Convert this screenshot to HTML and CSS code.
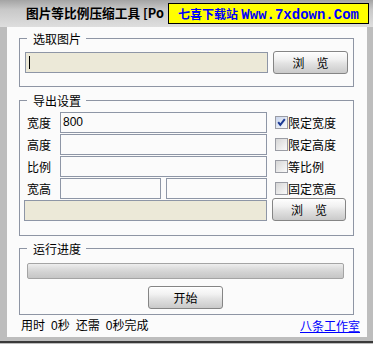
FILE: index.html
```html
<!DOCTYPE html>
<html lang="zh-CN">
<head>
<meta charset="utf-8">
<title>图片等比例压缩工具</title>
<link rel="stylesheet" href="styles.css">
</head>
<body>
<div class="window">
  <div class="titlebar">
    <span class="title">图片等比例压缩工具 [Po</span>
    <div class="ad"><span class="ad-cn">七喜下载站</span> <span class="ad-en">Www.7xdown.Com</span></div>
  </div>
  <div class="content">
    <fieldset class="group g1">
      <legend>选取图片</legend>
      <div class="pick-row">
        <div class="field beige caret"></div>
        <button class="btn">浏　览</button>
      </div>
    </fieldset>
    <fieldset class="group g2">
      <legend>导出设置</legend>
      <div class="settings">
        <span class="lbl">宽度</span>
        <div class="field">800</div>
        <label class="chk"><span class="box checked"><svg width="11" height="11" viewBox="0 0 11 11"><path d="M2.2 5.2 L4.3 7.8 L8.8 2.2" fill="none" stroke="#1c3a94" stroke-width="2"/></svg></span>限定宽度</label>

        <span class="lbl">高度</span>
        <div class="field"></div>
        <label class="chk"><span class="box"></span>限定高度</label>

        <span class="lbl">比例</span>
        <div class="field"></div>
        <label class="chk"><span class="box"></span>等比例</label>

        <span class="lbl">宽高</span>
        <div class="pair"><div class="field"></div><div class="field"></div></div>
        <label class="chk"><span class="box"></span>固定宽高</label>

        <div class="field beige wide"></div>
        <button class="btn btn-shift">浏　览</button>
      </div>
    </fieldset>
    <fieldset class="group g3">
      <legend>运行进度</legend>
      <div class="run">
        <div class="progress"></div>
        <button class="btn">开始</button>
      </div>
    </fieldset>
    <div class="status">
      <div class="times"><span>用时</span><span>0秒</span><span>还需</span><span>0秒完成</span></div>
      <a class="link" href="#">八条工作室</a>
    </div>
  </div>
  <div class="frame-line"></div>
</div>
</body>
</html>
```
FILE: styles.css
```css
* { box-sizing: border-box; }
html, body { margin: 0; padding: 0; }
body {
  width: 373px;
  height: 344px;
  overflow: hidden;
  background: #bdbdbd;
  font-family: "Liberation Sans", "Noto Sans CJK SC", sans-serif;
  font-size: 12px;
  color: #000;
}
.window {
  display: flex;
  flex-direction: column;
  height: 344px;
}
.titlebar {
  position: relative;
  height: 27px;
  flex: none;
  background: linear-gradient(#a4a4a4 0%, #c8c8c8 35%, #dedede 100%);
  overflow: hidden;
}
.title {
  display: block;
  padding: 5px 0 0 26px;
  line-height: 15px;
  font-family: "Noto Sans CJK SC", sans-serif;
  font-weight: bold;
  font-size: 12.7px;
  white-space: nowrap;
}
.ad {
  position: absolute;
  left: 168px;
  top: 3px;
  width: 201px;
  height: 21px;
  background: #ffff00;
  border: 1px solid #000;
  color: #0000ff;
  font-weight: bold;
  padding-left: 9px;
  line-height: 19px;
  white-space: nowrap;
}
.ad-cn {
  font-family: "Noto Sans CJK SC", sans-serif;
  font-size: 12px;
}
.ad-en {
  font-family: "Liberation Mono", monospace;
  font-size: 14px;
}
.content {
  flex: 1;
  margin: 0 6px 4px 7px;
  background: #fbfbfb;
  display: flex;
  flex-direction: column;
}
.frame-line {
  flex: none;
  height: 2px;
  margin-bottom: 1px;
  background: #3a3a3a;
}
.group {
  margin: 0 13px 0 12px;
  padding: 0;
  border: 1px solid #8e95a4;
  min-width: 0;
}
.group legend {
  margin-left: 7px;
  padding: 0 5px 0 6px;
  line-height: 13px;
  font-family: "Noto Sans CJK SC", sans-serif;
  font-size: 12px;
}
.g1 { margin-top: 5px; }
.g2 { margin-top: 7px; }
.g3 { margin-top: 6px; }

.field {
  height: 21px;
  border: 1px solid #8e96a6;
  background: #fbfbfb;
  padding-left: 2px;
  line-height: 19px;
  font-size: 12px;
}
.beige { background: #ece9d8; }
.caret { padding-left: 3px; display: flex; align-items: center; }
.caret::before {
  content: "";
  width: 1px;
  height: 13px;
  background: #000;
}
.btn {
  width: 75px;
  height: 23px;
  padding: 0;
  border: 1px solid #858585;
  border-radius: 3px;
  background: linear-gradient(#fefefe 0%, #f1f1f1 35%, #e2e2e2 55%, #d2d2d2 85%, #cacaca 100%);
  box-shadow: inset 0 1px 0 #ffffff;
  font-family: "Noto Sans CJK SC", sans-serif;
  font-size: 12px;
  color: #000;
  line-height: 20px;
}
.pick-row {
  display: flex;
  align-items: center;
  gap: 5px;
  padding: 6px 5px 12px 5px;
}
.pick-row .field { flex: 1; }

.settings {
  display: grid;
  grid-template-columns: 31px 207px 1fr;
  grid-template-rows: repeat(5, 21px);
  row-gap: 1px;
  column-gap: 5px;
  align-items: center;
  padding: 5px 0 14px 4px;
}
.lbl {
  padding-left: 3px;
  font-family: "Noto Sans CJK SC", sans-serif;
  white-space: nowrap;
}
.pair { display: flex; gap: 5px; }
.pair .field { flex: 1; }
.wide { grid-column: 1 / 3; }
.btn-shift { margin-top: -2px; width: 74px; }
.chk {
  display: flex;
  align-items: center;
  margin-left: 3px;
  font-family: "Noto Sans CJK SC", sans-serif;
  white-space: nowrap;
}
.box {
  width: 13px;
  height: 13px;
  border: 1px solid #9a9ca4;
  background: linear-gradient(135deg, #d6d6d6 0%, #e8e8e8 50%, #fafafa 100%);
  display: flex;
  align-items: center;
  justify-content: center;
  flex: none;
}
.box.checked {
  background: linear-gradient(135deg, #c8d4ec 0%, #e2e8f4 50%, #fafafa 100%);
}
.box svg { display: block; }

.run {
  width: 317px;
  margin-left: 7px;
  padding: 8px 0 5px 0;
  display: flex;
  flex-direction: column;
  align-items: center;
  gap: 7px;
}
.progress {
  align-self: stretch;
  height: 16px;
  border: 1px solid #a4a4a4;
  border-radius: 2px;
  background: linear-gradient(#eeeeee 0%, #dedede 30%, #d2d2d2 60%, #c6c6c6 100%);
}
.status {
  display: flex;
  justify-content: space-between;
  margin-top: 4px;
  padding: 0 7px 0 14px;
  line-height: 14px;
}
.times { display: flex; gap: 6px; }
.link {
  color: #0000ff;
  text-decoration: underline;
  font-family: "Noto Sans CJK SC", sans-serif;
}
```
